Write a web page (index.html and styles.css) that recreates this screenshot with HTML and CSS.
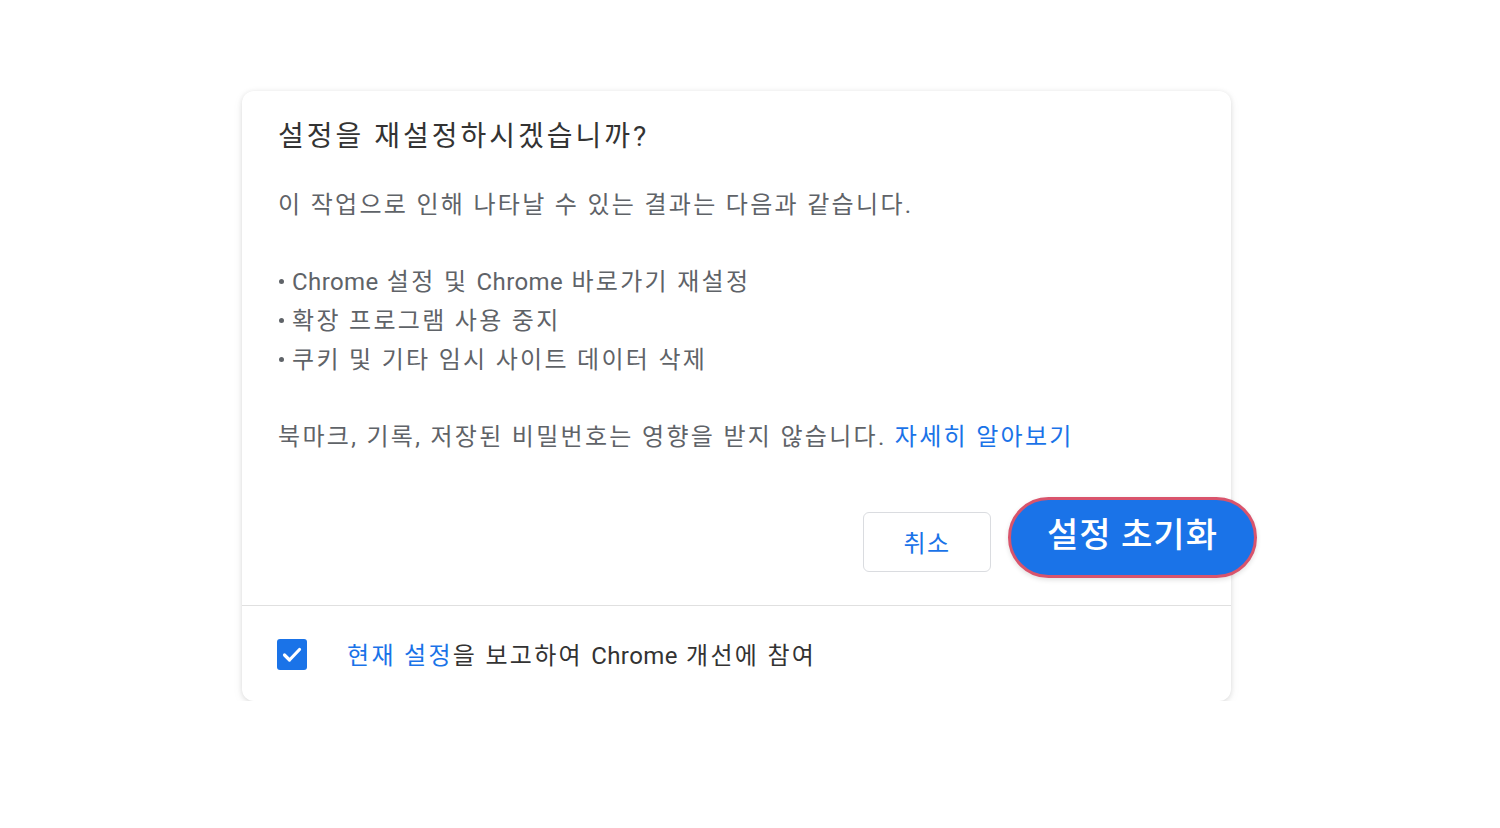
FILE: index.html
```html
<!DOCTYPE html>
<html lang="ko">
<head>
    <meta charset="UTF-8">
    <meta name="viewport" content="width=device-width, initial-scale=1.0">
    <title>설정 초기화</title>
    <link rel="stylesheet" href="styles.css">
</head>
<body>

    <div class="dialog">
        <div class="dialog-title">설정을 재설정하시겠습니까?</div>

        <div class="dialog-body">
            <p>이 작업으로 인해 나타날 수 있는 결과는 다음과 같습니다.</p>
            <p></p>
            <p><span class="dot"></span><span class="latin">Chrome</span> 설정 및 <span class="latin">Chrome</span> 바로가기 재설정</p>
            <p><span class="dot"></span>확장 프로그램 사용 중지</p>
            <p><span class="dot"></span>쿠키 및 기타 임시 사이트 데이터 삭제</p>
            <p></p>
            <p>북마크, 기록, 저장된 비밀번호는 영향을 받지 않습니다. <a class="link" href="#">자세히 알아보기</a></p>
        </div>

        <div class="actions">
            <button class="button cancel">취소</button>
            <button class="button reset">설정 초기화</button>
        </div>

        <div class="footer">
            <span class="checkbox">
                <svg width="30" height="31" viewBox="0 0 30 31">
                    <rect width="30" height="31" rx="3" fill="#1a73e8"/>
                    <path d="M7.5 16 L12.5 21 L22.5 10.5" fill="none" stroke="#fff" stroke-width="3.2" stroke-linecap="round" stroke-linejoin="round"/>
                </svg>
            </span>
            <span class="footer-text"><a class="link" href="#">현재 설정</a>을 보고하여 <span class="latin">Chrome</span> 개선에 참여</span>
        </div>
    </div>

</body>
</html>
```

FILE: styles.css
```css
/* Global */
* {
    margin: 0;
    padding: 0;
    box-sizing: border-box;
}

body {
    background-color: #fff;
    font-family: Roboto, "Noto Sans CJK KR", sans-serif;
    padding: 91px 0 0 242px;
    color: #333;
}

.dialog {
    width: 989px;
    background-color: #fff;
    border-radius: 12px;
    box-shadow: 0 1px 5px rgba(0, 0, 0, 0.12), 0 3px 12px rgba(0, 0, 0, 0.05);
}

.dialog-title {
    padding: 31px 36px 0;
    height: 60px;
    font-size: 28px;
    line-height: 29px;
    letter-spacing: 3px;
    color: #333;
}

.dialog-body {
    margin-top: 35px;
    padding: 0 36px;
    font-size: 24px;
    line-height: 38.67px;
    letter-spacing: 2.3px;
    color: #5f6368;
}

.dialog-body p {
    height: 38.67px;
    white-space: nowrap;
}

.latin {
    letter-spacing: 0.4px;
}

.dot {
    display: inline-block;
    width: 5px;
    height: 5px;
    border-radius: 50%;
    background-color: currentColor;
    margin: 0 8px 0 1px;
    vertical-align: middle;
    position: relative;
    top: -2px;
}

.link {
    color: #1a73e8;
    text-decoration: none;
}

/* Buttons */
.actions {
    display: flex;
    justify-content: flex-end;
    align-items: flex-start;
    gap: 17px;
    margin-top: 40.3px;
    margin-right: -26px;
    height: 81px;
}

.button {
    font-family: Roboto, "Noto Sans CJK KR", sans-serif;
    cursor: pointer;
    background: none;
}

.button.cancel {
    margin-top: 15px;
    width: 128px;
    height: 60px;
    border: 1px solid #dadce0;
    border-radius: 6px;
    background-color: #fff;
    color: #1a73e8;
    font-size: 24px;
    letter-spacing: 1.5px;
}

.button.reset {
    width: 249px;
    height: 81px;
    border: 3px solid #d9546c;
    border-radius: 41px;
    background-color: #1a73e8;
    color: #fff;
    font-size: 34px;
    font-weight: 500;
    letter-spacing: 1px;
    padding-bottom: 9px;
    box-shadow: 0 2px 5px rgba(0, 0, 0, 0.12);
}

/* Footer */
.footer {
    margin-top: 27px;
    border-top: 1px solid #e0e0e0;
    height: 96px;
    padding: 1px 36px 0 35px;
    display: flex;
    align-items: center;
    gap: 40px;
}

.checkbox {
    display: flex;
    position: relative;
    top: 1px;
}

.footer-text {
    font-size: 24px;
    letter-spacing: 2.3px;
    color: #333;
}
```
